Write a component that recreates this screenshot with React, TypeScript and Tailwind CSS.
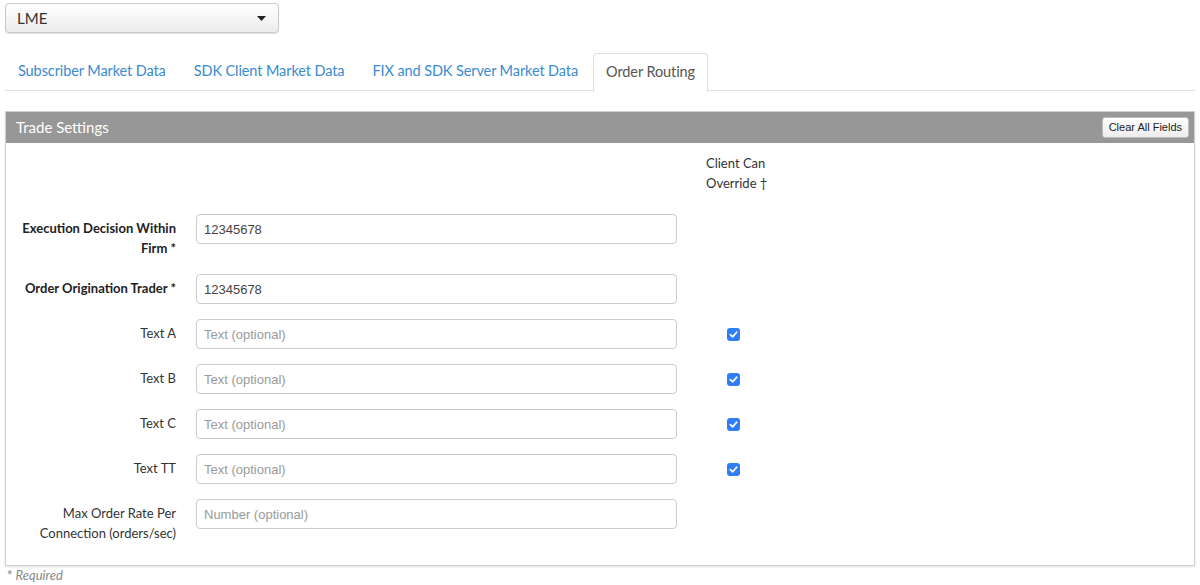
import { useState } from 'react'

const tabs = ['Subscriber Market Data', 'SDK Client Market Data', 'FIX and SDK Server Market Data', 'Order Routing']

type Row = {
  label: string[]
  bold?: boolean
  value?: string
  placeholder?: string
  override?: boolean
}

const rows: Row[] = [
  { label: ['Execution Decision Within', 'Firm *'], bold: true, value: '12345678' },
  { label: ['Order Origination Trader *'], bold: true, value: '12345678' },
  { label: ['Text A'], placeholder: 'Text (optional)', override: true },
  { label: ['Text B'], placeholder: 'Text (optional)', override: true },
  { label: ['Text C'], placeholder: 'Text (optional)', override: true },
  { label: ['Text TT'], placeholder: 'Text (optional)', override: true },
  { label: ['Max Order Rate Per', 'Connection (orders/sec)'], placeholder: 'Number (optional)' },
]

function CheckBox({ checked, onClick }: { checked: boolean; onClick: () => void }) {
  return (
    <button
      onClick={onClick}
      className={`w-[13px] h-[13px] rounded-[3px] flex items-center justify-center ${
        checked ? 'bg-[#2f7ef6]' : 'bg-white border border-[#999]'
      }`}
    >
      {checked && (
        <svg width="9" height="9" viewBox="0 0 10 10">
          <path d="M1.5 5.2 L4 7.6 L8.6 2.4" fill="none" stroke="white" strokeWidth="1.8" strokeLinecap="round" strokeLinejoin="round" />
        </svg>
      )}
    </button>
  )
}

export default function App() {
  const [checks, setChecks] = useState<Record<number, boolean>>({ 2: true, 3: true, 4: true, 5: true })

  return (
    <div className="w-[1200px] h-[585px] bg-white px-[5px] pt-[3px] font-['Lato','Noto_Sans',sans-serif] text-[#333]">
      <button className="w-[274px] h-[30px] flex items-center justify-between pl-[11px] pr-[12px] rounded-[4px] border border-[#c8c8c8] bg-gradient-to-b from-white to-[#ececec] shadow-[0_1px_1px_rgba(0,0,0,0.12)]">
        <span className="text-[15px] text-[#333]">LME</span>
        <svg width="9" height="5" viewBox="0 0 9 5">
          <path d="M0 0 L9 0 L4.5 5 Z" fill="#222" />
        </svg>
      </button>

      <div className="mt-[20px] flex border-b border-[#ddd] h-[38px]">
        {tabs.map((t, i) => {
          const active = i === tabs.length - 1
          return (
            <div
              key={t}
              className={`mr-[2px] px-[12px] h-[38px] flex items-center pb-[2px] text-[14.5px] tracking-[-0.1px] rounded-t-[4px] ${
                active
                  ? 'border border-[#ddd] border-b-white bg-white text-[#555] -mb-px h-[39px]'
                  : 'text-[#3a8bd0] border border-transparent'
              }`}
            >
              {t}
            </div>
          )
        })}
      </div>

      <div className="mt-[20px] border border-[#cfcfcf] shadow-[0_1px_2px_rgba(0,0,0,0.12)]">
        <div className="h-[31px] bg-[#979797] flex items-center justify-between pl-[10px] pr-[5px]">
          <span className="text-white text-[15px]">Trade Settings</span>
          <button className="h-[21px] px-[6px] rounded-[3px] border border-[#bbb] bg-gradient-to-b from-white to-[#ededed] font-['Liberation_Sans',Arial,sans-serif] text-[11px] text-[#222]">
            Clear All Fields
          </button>
        </div>

        <div className="pt-[10px] pb-[21px] text-[13px]">
          <div className="flex">
            <div className="w-[671px]" />
            <div className="pl-[29px] leading-[20px]">
              Client Can
              <br />
              Override †
            </div>
          </div>

          <div className="mt-[21px] flex flex-col gap-[15px]">
            {rows.map((r, i) => (
              <div key={i} className="flex items-start">
                <div
                  className={`w-[170px] shrink-0 text-right pt-[4px] pb-[1px] leading-[20px] ${
                    r.bold ? 'font-bold text-[#222]' : 'text-[#333]'
                  }`}
                >
                  {r.label.map((l) => (
                    <div key={l}>{l}</div>
                  ))}
                </div>
                <input
                  defaultValue={r.value}
                  placeholder={r.placeholder}
                  className="ml-[20px] w-[481px] h-[30px] px-[7px] rounded-[4px] border border-[#ccc] font-['Liberation_Sans',Arial,sans-serif] text-[13px] text-[#444] placeholder:text-[#9a9a9a] outline-none"
                />
                {r.override && (
                  <div className="pl-[50px] pt-[9px]">
                    <CheckBox checked={!!checks[i]} onClick={() => setChecks({ ...checks, [i]: !checks[i] })} />
                  </div>
                )}
              </div>
            ))}
          </div>
        </div>
      </div>

      <div className="mt-[1px] pl-[2px] text-[13px] leading-[17px] italic text-[#888]">
        <span className="font-bold not-italic text-[#999]">*</span> Required
      </div>
    </div>
  )
}
